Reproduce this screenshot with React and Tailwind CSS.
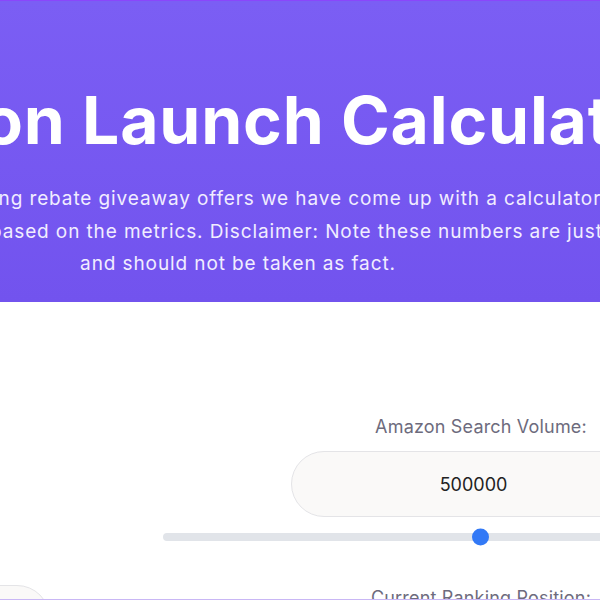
export default function App() {
  return (
    <div className="relative h-[600px] overflow-hidden bg-white font-['Inter',sans-serif]">
      <section className="h-[302px] border-t border-[#8a47fb] bg-linear-to-b from-[#7b5ef4] to-[#7253ee] flex">
        <div className="w-[1400px] shrink-0 ml-[-462px] text-center text-white">
          <h1 className="pt-[86px] text-[66px] font-bold leading-none tracking-[0.012em]">
            Amazon Launch Calculator
          </h1>
          <p className="mt-[30px] text-[19px] leading-[32.5px] text-[#f1edff] tracking-[0.047em]">
            After analyzing rebate giveaway offers we have come up with a calculator
            <br />
            to help estimate units based on the metrics. Disclaimer: Note these numbers are just estimates
            <br />
            and should not be taken as fact.
          </p>
        </div>
      </section>

      <section className="pt-[111px]">
        <div className="flex ml-[-400px]">
          <div className="w-[450px] shrink-0 flex flex-col items-end">
            <div className="mt-[172px] h-[66px] w-[365px] rounded-full bg-[#faf9f8] border border-[#e4e4e7]" />
          </div>

          <div className="ml-[113px] w-[636px] shrink-0">
            <label className="block text-center text-[18px] leading-[27px] tracking-[0.01em] text-[#6d6b7d]">
              Amazon Search Volume:
            </label>
            <input
              readOnly
              value="500000"
              className="mt-[11px] ml-[128px] block h-[66px] w-[365px] rounded-full border border-[#e4e4e7] bg-[#faf9f8] text-center text-[18px] text-[#222] outline-none"
            />
            <div className="relative mt-[16px] h-[8px] rounded-full bg-[#e1e4e9]">
              <div className="absolute left-[309px] top-1/2 -translate-y-1/2 h-[17px] w-[17px] rounded-full bg-[#3279f6]" />
            </div>
            <label className="mt-[43px] block text-center text-[18px] leading-[27px] tracking-[0.01em] text-[#6d6b7d]">
              Current Ranking Position:
            </label>
          </div>
        </div>
      </section>

      <div className="absolute bottom-0 left-0 right-0 h-px bg-[#c9b7f5]" />
    </div>
  );
}
